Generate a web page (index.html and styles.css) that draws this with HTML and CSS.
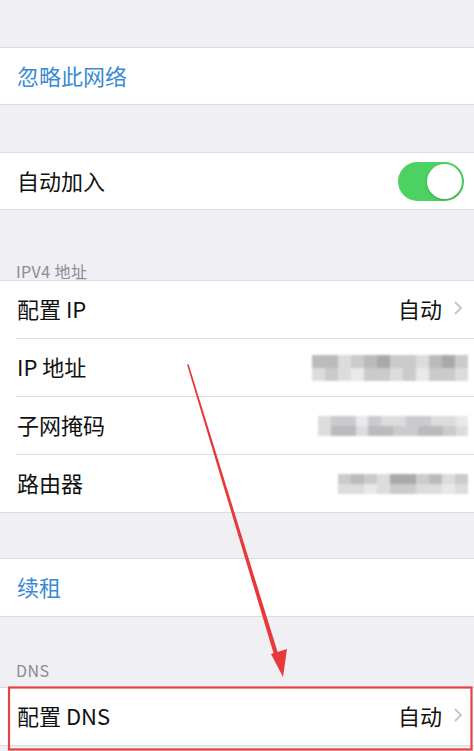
FILE: index.html
```html
<!DOCTYPE html>
<html lang="zh-CN">
<head>
<meta charset="utf-8">
<link rel="stylesheet" href="styles.css">
</head>
<body>
<div class="page">
  <div class="gap gap-top"></div>
  <div class="group">
    <div class="row short"><span class="label blue">忽略此网络</span></div>
  </div>
  <div class="gap"></div>
  <div class="group">
    <div class="row short"><span class="label">自动加入</span><span class="toggle"><span class="knob"></span></span></div>
  </div>
  <div class="header header-ip">IPV4 地址</div>
  <div class="group">
    <div class="row sep"><span class="label">配置 IP</span><span class="value">自动<svg class="chev" viewBox="0 0 10 16"><path d="M2 2l6 6-6 6" /></svg></span></div>
    <div class="row sep"><span class="label">IP 地址</span>
      <span class="mosaic ip">
        <i class="m2"></i><i class="m2"></i><i class="m4"></i><i class="m3"></i><i class="m2"></i><i class="m1"></i><i class="m3"></i><i class="m3"></i><i class="m4"></i><i class="m2"></i><i class="m1"></i><i class="m3"></i>
        <i class="m4"></i><i class="m3"></i><i class="m4"></i><i class="m5"></i><i class="m3"></i><i class="m3"></i><i class="m4"></i><i class="m3"></i><i class="m5"></i><i class="m3"></i><i class="m3"></i><i class="m4"></i>
      </span>
    </div>
    <div class="row sep"><span class="label">子网掩码</span>
      <span class="mosaic sub">
        <i class="m4"></i><i class="m3"></i><i class="m3"></i><i class="m5"></i><i class="m3"></i><i class="m4"></i><i class="m4"></i><i class="m3"></i><i class="m3"></i><i class="m4"></i><i class="m4"></i><i class="m5"></i>
        <i class="m4"></i><i class="m2"></i><i class="m2"></i><i class="m4"></i><i class="m2"></i><i class="m2"></i><i class="m3"></i><i class="m3"></i><i class="m2"></i><i class="m2"></i><i class="m3"></i><i class="m4"></i>
      </span>
    </div>
    <div class="row"><span class="label">路由器</span>
      <span class="mosaic rt">
        <i class="m3"></i><i class="m2"></i><i class="m3"></i><i class="m4"></i><i class="m1"></i><i class="m1"></i><i class="m3"></i><i class="m2"></i><i class="m4"></i><i class="m3"></i>
        <i class="m4"></i><i class="m4"></i><i class="m5"></i><i class="m4"></i><i class="m3"></i><i class="m3"></i><i class="m4"></i><i class="m4"></i><i class="m5"></i><i class="m4"></i>
      </span>
    </div>
  </div>
  <div class="gap gap-mid"></div>
  <div class="group">
    <div class="row"><span class="label blue">续租</span></div>
  </div>
  <div class="header header-dns">DNS</div>
  <div class="group">
    <div class="row"><span class="label">配置 DNS</span><span class="value">自动<svg class="chev" viewBox="0 0 10 16"><path d="M2 2l6 6-6 6" /></svg></span></div>
  </div>
  <svg class="annot" viewBox="0 0 474 751" width="474" height="751">
    <path d="M188 365 L278 656 L275.5 657 Z" stroke="#e8393a" stroke-width="1.6" fill="#e8393a" stroke-linejoin="round"/>
    <path d="M271 654 L287 649 L283 677 Z" fill="#e8393a"/>
    <rect x="9" y="687.5" width="462.5" height="62" fill="none" stroke="#e34244" stroke-width="2.2"/>
  </svg>
</div>
</body>
</html>
```
FILE: styles.css
```css
html, body {
  margin: 0;
  padding: 0;
  background: #efeff4;
}
.page {
  position: relative;
  width: 474px;
  height: 751px;
  overflow: hidden;
  font-family: "Noto Sans CJK SC", "Noto Sans", sans-serif;
  color: #111;
}
.gap { height: 47px; }
.gap-top { height: 47px; }
.gap-mid { height: 45px; }
.group {
  background: #fff;
  border-top: 1px solid #dcdce0;
  border-bottom: 1px solid #dcdce0;
}
.row {
  height: 57px;
  box-sizing: border-box;
  display: flex;
  align-items: center;
  justify-content: space-between;
  padding: 0 11px 3px 17px;
  position: relative;
}
.row.short { height: 56px; }
.row.sep { height: 58px; border-bottom: 1px solid #dedee2; margin-left: 16px; padding-left: 1px; }
.label {
  font-size: 22px;
  line-height: 1;
}
.blue { color: #3a8ad6; }
.header {
  box-sizing: border-box;
  padding-left: 16px;
  display: flex;
  align-items: flex-end;
  font-size: 16px;
  line-height: 16px;
  color: #8c8c92;
  letter-spacing: 0.4px;
}
.header-ip { height: 70px; padding-bottom: 1px; }
.header-dns { height: 70px; padding-bottom: 9px; }
.value {
  display: flex;
  align-items: center;
  font-size: 22px;
  line-height: 1;
  color: #111;
}
.chev {
  width: 10px;
  height: 16px;
  margin-left: 11px;
  fill: none;
  stroke: #c4c4c9;
  stroke-width: 1.8;
}
.toggle {
  width: 66px;
  height: 39px;
  border-radius: 20px;
  background: #4cd263;
  display: flex;
  align-items: center;
  justify-content: flex-end;
  padding: 0 2px;
  box-sizing: border-box;
  margin-right: -1px;
  margin-top: 3px;
}
.knob {
  width: 35px;
  height: 35px;
  border-radius: 50%;
  background: #fff;
  box-shadow: 0 1px 3px rgba(0,0,0,0.25);
}
.mosaic {
  display: grid;
  grid-auto-rows: 13px;
  margin-right: -5px;
  margin-top: 3px;
  filter: blur(0.8px);
}
.mosaic i { display: block; }
.mosaic.ip { grid-template-columns: repeat(12, 13px); }
.mosaic.sub { grid-template-columns: repeat(12, 12.5px); grid-auto-rows: 10px; }
.mosaic.rt { grid-template-columns: repeat(10, 13px); grid-auto-rows: 10px; }
.m1 { background: #a9a9ab; }
.m2 { background: #bbbbbd; }
.m3 { background: #cbcbcd; }
.m4 { background: #dcdcde; }
.m5 { background: #e9e9eb; }
.annot {
  position: absolute;
  left: 0;
  top: 0;
  pointer-events: none;
}
```
